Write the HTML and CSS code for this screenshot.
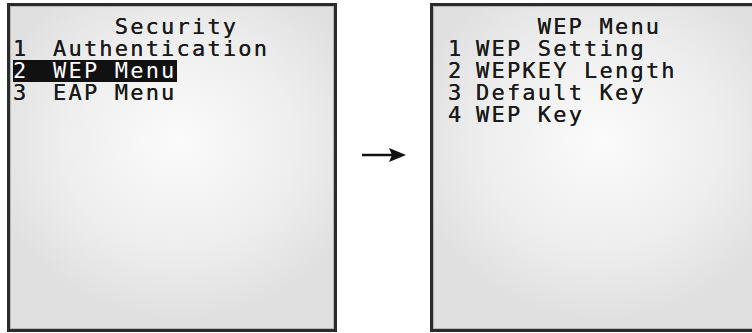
FILE: index.html
```html
<!DOCTYPE html>
<html lang="en">
<head>
  <meta charset="UTF-8" />
  <title>Security / WEP Menu</title>
  <link rel="stylesheet" href="styles.css">
</head>
<body>
  <div class="stage">
    <div class="screen left">
      <div class="title">Security</div>
      <div class="row"><span class="num">1</span><span>Authentication</span></div>
      <div class="row sel"><span class="num">2</span><span>WEP Menu</span></div>
      <div class="row"><span class="num">3</span><span>EAP Menu</span></div>
    </div>

    <div class="arrow">
      <svg width="46" height="20" viewBox="0 0 46 20">
        <line x1="1" y1="10" x2="32" y2="10" stroke="#111" stroke-width="2.5"/>
        <polygon points="28,3 45,10 28,17 31,10" fill="#111"/>
      </svg>
    </div>

    <div class="screen right">
      <div class="title">WEP Menu</div>
      <div class="row"><span class="num">1</span><span>WEP Setting</span></div>
      <div class="row"><span class="num">2</span><span>WEPKEY Length</span></div>
      <div class="row"><span class="num">3</span><span>Default Key</span></div>
      <div class="row"><span class="num">4</span><span>WEP Key</span></div>
    </div>
  </div>
</body>
</html>
```

FILE: styles.css
```css
html, body {
  margin: 0;
  background: #fff;
  overflow: hidden;
}
.stage {
  display: flex;
  align-items: flex-start;
  padding: 3px 0 0 7px;
  width: 752px;
  height: 333px;
  box-sizing: border-box;
  overflow: hidden;
}
/* terminal screens */
.screen {
  box-sizing: border-box;
  width: 330px;
  height: 329px;
  flex: none;
  border: 3px solid #2b2b2b;
  box-shadow: inset 0 0 0 1px #b8b8b8;
  background: radial-gradient(ellipse 60% 55% at 52% 42%, #fbfbfb 0%, #eeeeee 60%, #e0e0e0 100%);
  padding-top: 10px;
  font-family: "DejaVu Sans Mono", "Liberation Mono", monospace;
  font-size: 22px;
  line-height: 22px;
  letter-spacing: 2.2px;
  color: #1a1a1a;
  text-shadow: 0 0 0.4px #1a1a1a;
}
.title {
  text-align: center;
  padding-left: 9px;
}
.row {
  display: flex;
}
.left .row {
  padding-left: 3px;
}
.left .num {
  width: 40px;
  flex: none;
}
.left .row.sel {
  width: fit-content;
  margin-left: 3px;
  padding-left: 0;
  background: #111;
  color: #fff;
  text-shadow: none;
}
.right .row {
  padding-left: 15px;
}
.right .num {
  width: 28px;
  flex: none;
}
/* arrow between screens */
.arrow {
  width: 93px;
  flex: none;
  display: flex;
  justify-content: center;
  padding-top: 142px;
}
.arrow svg {
  margin-left: 1px;
}
```
